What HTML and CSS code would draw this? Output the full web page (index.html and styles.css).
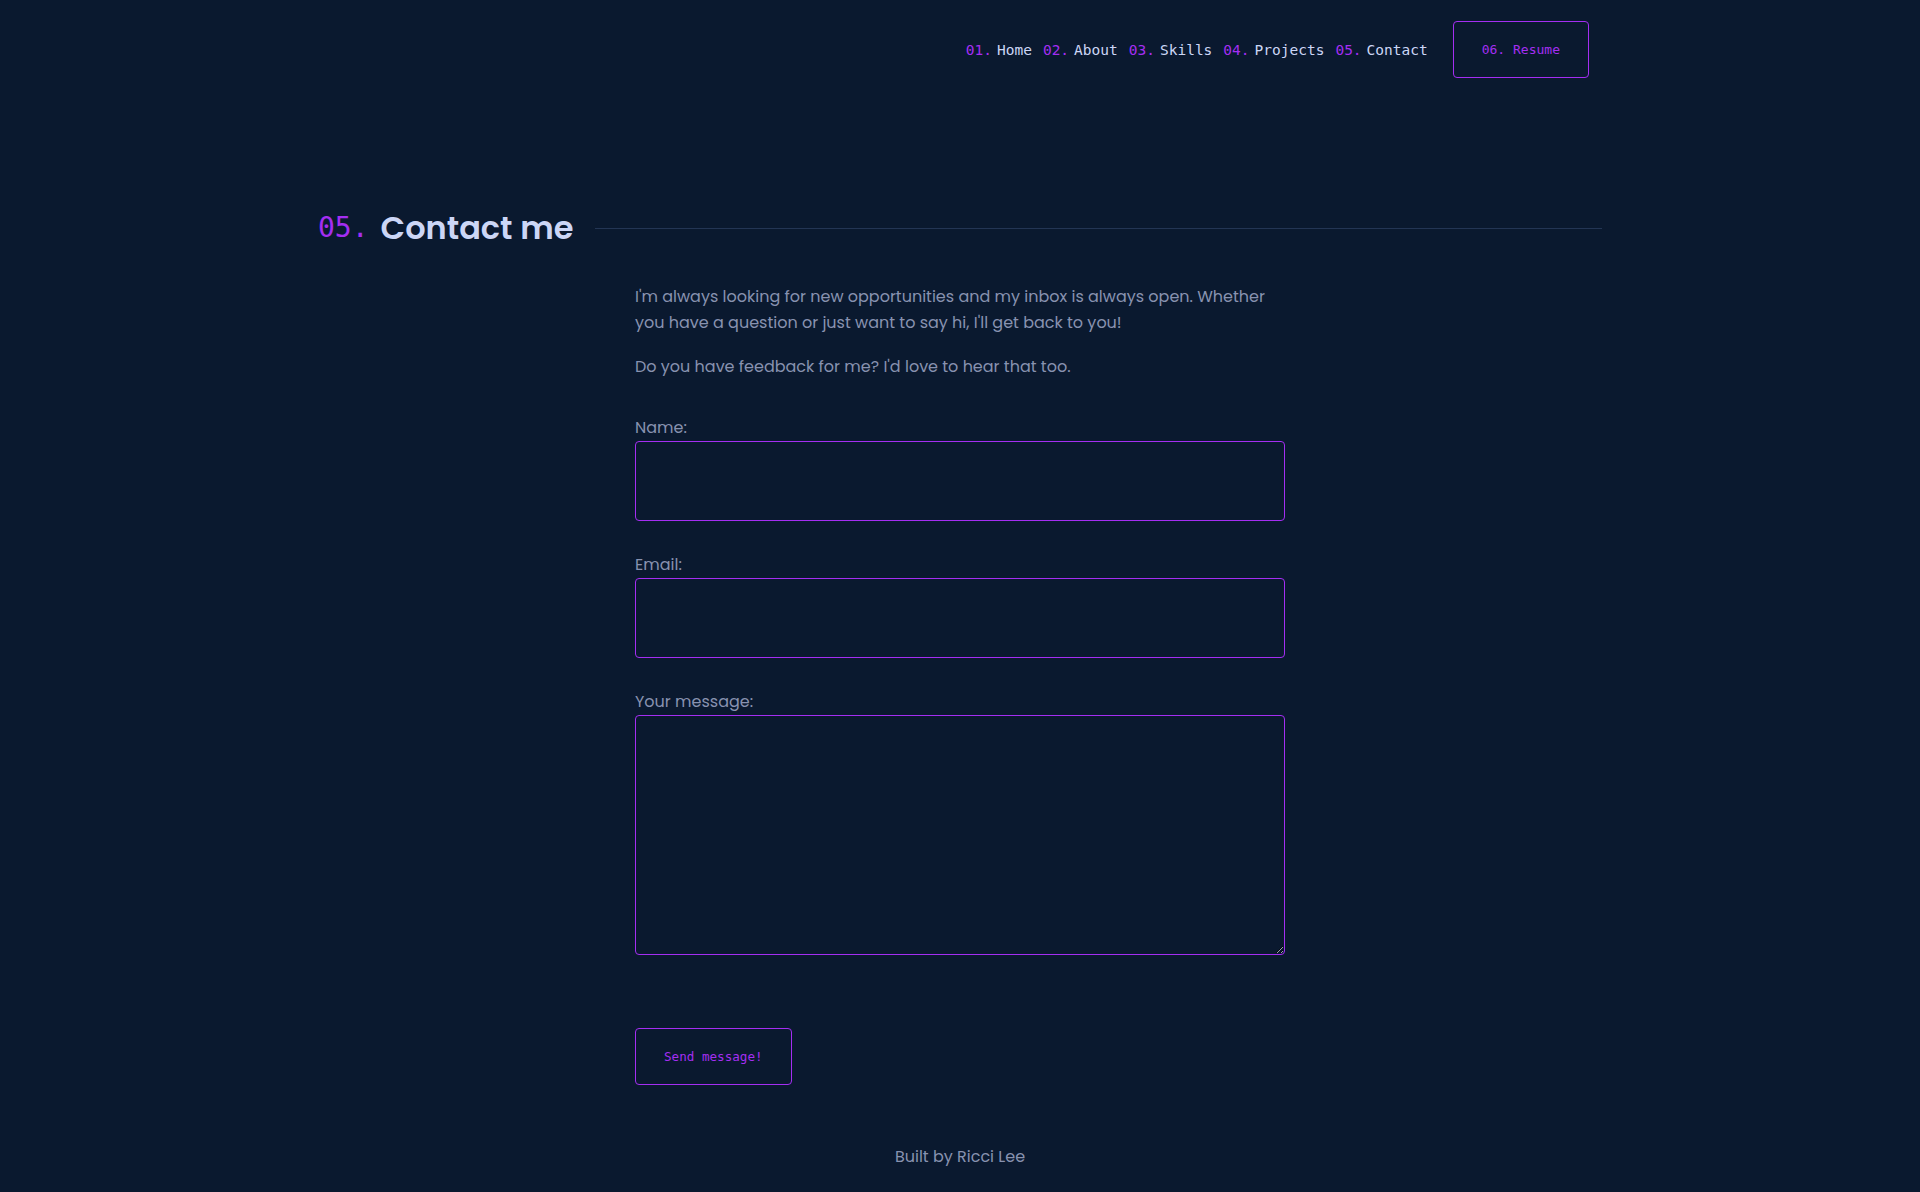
FILE: index.html
```html
<!DOCTYPE html>
<html lang="en">
<head>
<meta charset="utf-8">
<title>Contact - Ricci Lee</title>
<link rel="stylesheet" href="styles.css">
</head>
<body>
<header class="site-header">
  <nav class="nav">
    <ol class="nav-list">
      <li class="nav-item"><span class="num">01.</span><a href="#" class="nav-link">Home</a></li>
      <li class="nav-item"><span class="num">02.</span><a href="#" class="nav-link">About</a></li>
      <li class="nav-item"><span class="num">03.</span><a href="#" class="nav-link">Skills</a></li>
      <li class="nav-item"><span class="num">04.</span><a href="#" class="nav-link">Projects</a></li>
      <li class="nav-item"><span class="num">05.</span><a href="#" class="nav-link">Contact</a></li>
    </ol>
    <a href="#" class="resume-btn"><span class="num">06.</span> Resume</a>
  </nav>
</header>

<main class="main">
  <section class="section">
    <h2 class="section-title"><span class="title-num">05.</span><span class="title-text">Contact me</span><span class="title-line"></span></h2>
    <div class="contact">
      <p class="contact-text">I'm always looking for new opportunities and my inbox is always open. Whether you have a question or just want to say hi, I'll get back to you!</p>
      <p class="contact-text">Do you have feedback for me? I'd love to hear that too.</p>
      <form class="form">
        <div class="field">
          <label class="label" for="name">Name:</label>
          <input class="input" id="name" type="text">
        </div>
        <div class="field">
          <label class="label" for="email">Email:</label>
          <input class="input" id="email" type="email">
        </div>
        <div class="field">
          <label class="label" for="message">Your message:</label>
          <textarea class="textarea" id="message"></textarea>
        </div>
        <button type="button" class="send-btn">Send message!</button>
      </form>
    </div>
  </section>
</main>

<footer class="footer">Built by Ricci Lee</footer>
</body>
</html>
```

FILE: styles.css
```css
* { box-sizing: border-box; }

html, body {
  margin: 0;
  padding: 0;
  background: #0a192f;
}

body {
  font-family: "Poppins", "Open Sans", "Noto Sans", sans-serif;
  color: #8892b0;
  min-height: 1192px;
}

.site-header {
  display: flex;
  justify-content: flex-end;
  padding: 21px 331px 0 0;
}

.nav {
  display: flex;
  align-items: center;
  gap: 25px;
}

.nav-list {
  display: flex;
  align-items: center;
  gap: 11px;
  list-style: none;
  margin: 0;
  padding: 0;
  font-family: "DejaVu Sans Mono", monospace;
  font-size: 14.5px;
}

.nav-item {
  display: flex;
  gap: 5px;
}

.num { color: #a42ef2; }

.nav-link {
  color: #ccd6f6;
  text-decoration: none;
}

.resume-btn {
  display: block;
  font-family: "DejaVu Sans Mono", monospace;
  font-size: 13px;
  line-height: 17px;
  color: #a42ef2;
  text-decoration: none;
  border: 1px solid #a42ef2;
  border-radius: 4px;
  padding: 19px 28px;
}

.main {
  padding-top: 131px;
}

.section {
  max-width: 1284px;
  margin: 0 auto;
}

.section-title {
  display: flex;
  align-items: center;
  margin: 0;
  font-size: 32px;
  line-height: 38px;
  font-weight: 600;
  color: #ccd6f6;
}

.title-num {
  font-family: "DejaVu Sans Mono", monospace;
  font-weight: 400;
  font-size: 28px;
  color: #a42ef2;
  margin-right: 12px;
}

.title-line {
  flex: 1;
  height: 1px;
  background: #233554;
  margin-left: 22px;
}

.contact {
  margin-left: 317px;
  width: 650px;
  padding-top: 37px;
}

.contact-text {
  margin: 0 0 18px;
  font-size: 16px;
  line-height: 26px;
}

.form {
  display: flex;
  flex-direction: column;
  align-items: flex-start;
  padding-top: 17px;
}

.field {
  display: flex;
  flex-direction: column;
  width: 100%;
  margin-bottom: 31px;
}

.label {
  font-size: 16px;
  line-height: 26px;
  color: #8892b0;
}

.input,
.textarea {
  width: 100%;
  background: transparent;
  border: 1px solid #a42ef2;
  border-radius: 4px;
  color: #ccd6f6;
  font-family: inherit;
  font-size: 16px;
  padding: 10px 12px;
  outline: none;
}

.input { height: 80px; }

.textarea {
  height: 240px;
  resize: vertical;
}

.send-btn {
  margin-top: 42px;
  background: transparent;
  border: 1px solid #a42ef2;
  border-radius: 4px;
  color: #a42ef2;
  font-family: "DejaVu Sans Mono", monospace;
  font-size: 12.6px;
  line-height: 17px;
  padding: 19px 28px;
  cursor: pointer;
}

.footer {
  text-align: center;
  font-size: 16px;
  line-height: 24px;
  color: #8892b0;
  padding: 60px 0 24px;
}
```
